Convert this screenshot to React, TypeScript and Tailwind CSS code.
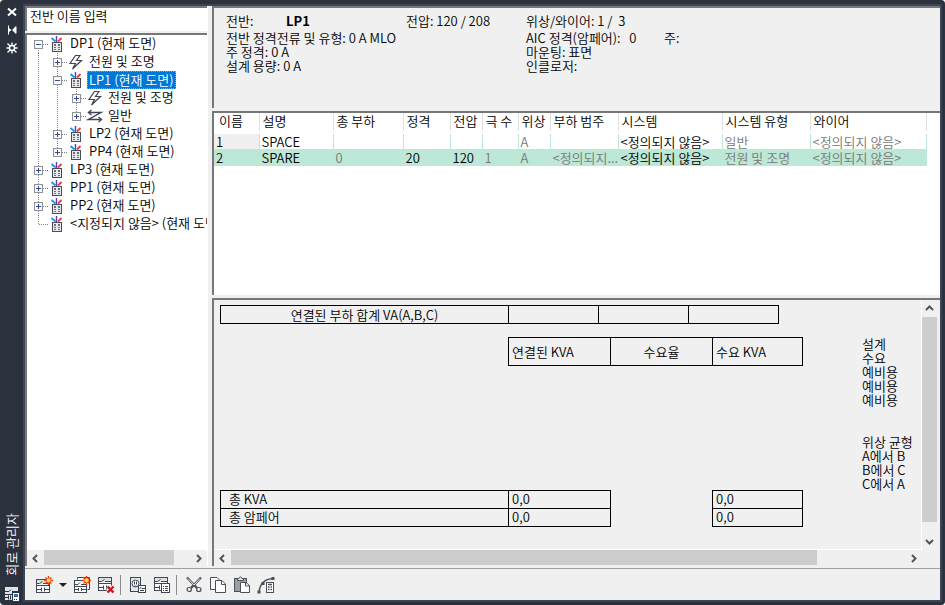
import { useState } from 'react';
import type { ReactNode } from 'react';

type IconKind = 'panel' | 'power' | 'general';
type Guide = 'line' | 'blank' | 'plus' | 'minus' | 'leaf';

interface TreeRow {
  id: string;
  label: string;
  icon: IconKind;
  guides: Guide[];
  first?: boolean;
  last?: boolean;
}

const treeRows: TreeRow[] = [
  { id: 'dp1', label: 'DP1 (현재 도면)', icon: 'panel', guides: ['minus'], first: true },
  { id: 'dp1-power', label: '전원 및 조명', icon: 'power', guides: ['line', 'plus'] },
  { id: 'lp1', label: 'LP1 (현재 도면)', icon: 'panel', guides: ['line', 'minus'] },
  { id: 'lp1-power', label: '전원 및 조명', icon: 'power', guides: ['line', 'line', 'plus'] },
  { id: 'lp1-general', label: '일반', icon: 'general', guides: ['line', 'line', 'plus'], last: true },
  { id: 'lp2', label: 'LP2 (현재 도면)', icon: 'panel', guides: ['line', 'plus'] },
  { id: 'pp4', label: 'PP4 (현재 도면)', icon: 'panel', guides: ['line', 'plus'], last: true },
  { id: 'lp3', label: 'LP3 (현재 도면)', icon: 'panel', guides: ['plus'] },
  { id: 'pp1', label: 'PP1 (현재 도면)', icon: 'panel', guides: ['plus'] },
  { id: 'pp2', label: 'PP2 (현재 도면)', icon: 'panel', guides: ['plus'] },
  { id: 'none', label: '<지정되지 않음> (현재 도면)', icon: 'panel', guides: ['leaf'], last: true },
];

const columns = [
  { title: '이름', width: 'w-[45px]' },
  { title: '설명', width: 'w-[74px]' },
  { title: '총 부하', width: 'w-[70px]' },
  { title: '정격', width: 'w-[47px]' },
  { title: '전압', width: 'w-[32px]' },
  { title: '극 수', width: 'w-[36px]' },
  { title: '위상', width: 'w-[32px]' },
  { title: '부하 범주', width: 'w-[68px]' },
  { title: '시스템', width: 'w-[104px]' },
  { title: '시스템 유형', width: 'w-[88px]' },
  { title: '와이어', width: 'w-[116px]' },
];

const circuits = [
  ['1', 'SPACE', '', '', '', '', 'A', '', '<정의되지 않음>', '일반', '<정의되지 않음>'],
  ['2', 'SPARE', '0', '20', '120', '1', 'A', '<정의되지...', '<정의되지 않음>', '전원 및 조명', '<정의되지 않음>'],
];

// calculated columns are read-only and drawn in grey
const readOnly = [2, 5, 6, 7, 9, 10];

function GuideCell({ kind, first, last }: { kind: Guide; first?: boolean; last?: boolean }) {
  const box = kind === 'plus' || kind === 'minus';
  return (
    <svg width="19" height="18" viewBox="0 0 19 18" className="shrink-0" shapeRendering="crispEdges">
      {kind !== 'blank' && (
        <path d={`M9.5 ${first ? 9 : 0}V${last ? 9 : 18}`} stroke="#808080" strokeDasharray="1 1" />
      )}
      {(box || kind === 'leaf') && <path d="M10 9.5H20" stroke="#808080" strokeDasharray="1 1" />}
      {box && (
        <>
          <rect x="5.5" y="5.5" width="8" height="8" fill="#fafafa" stroke="#919191" />
          <path d="M7 9.5h5" stroke="#2d4b9b" />
          {kind === 'plus' && <path d="M9.5 7v5" stroke="#2d4b9b" />}
        </>
      )}
    </svg>
  );
}

function TreeIcon({ kind }: { kind: IconKind }) {
  if (kind === 'power') {
    return (
      <svg width="20" height="18" viewBox="0 0 20 18" className="shrink-0" fill="none" stroke="#3f4552">
        <path d="M8.5 2.5L3 10.5H8.5L5.5 16L14.5 7.5H9.5L13 2.5Z" strokeWidth="1.2" />
      </svg>
    );
  }
  if (kind === 'general') {
    return (
      <svg width="20" height="18" viewBox="0 0 20 18" className="shrink-0" fill="none" stroke="#3f4552" strokeWidth="1.4">
        <path d="M2.5 5.5H15L2.5 12.5H14.5" />
        <path d="M5.5 3L2.5 5.5L5.5 8M12.5 10L15.5 12.5L12.5 15" />
      </svg>
    );
  }
  return (
    <svg width="20" height="18" viewBox="0 0 20 18" className="shrink-0" fill="none">
      <path d="M3.5 3L7.5 6.5" stroke="#1e90ee" strokeWidth="1.8" />
      <path d="M13.5 3L10 6.5" stroke="#f0343c" strokeWidth="1.8" />
      <path d="M8.5 1V7" stroke="#5a3fb4" strokeWidth="1.4" />
      <rect x="4.5" y="7.5" width="9" height="9" fill="#e6e8ea" stroke="#474d58" />
      <path d="M6 9h2v2H6zM10 9h2v2h-2zM6 12h2v1H6zM10 12h2v1h-2zM6 14h2v1H6zM10 14h2v1h-2z" fill="#6a6f78" />
    </svg>
  );
}

function ArrowButton({ dir, label }: { dir: 'left' | 'right' | 'up' | 'down'; label: string }) {
  const paths = {
    left: 'M10 5L6.5 8.5L10 12',
    right: 'M7 5L10.5 8.5L7 12',
    up: 'M5 10L8.5 6.5L12 10',
    down: 'M5 7L8.5 10.5L12 7',
  };
  return (
    <button type="button" aria-label={label} className="flex size-[17px] shrink-0 items-center justify-center">
      <svg width="17" height="17" viewBox="0 0 17 17" className="shrink-0" fill="none" stroke="#555" strokeWidth="2">
        <path d={paths[dir]} />
      </svg>
    </button>
  );
}

// schematic sheet shared by most of the toolbar icons
function Sheet() {
  return (
    <>
      <rect x="1.5" y="3.5" width="13" height="13" fill="#fafafa" stroke="#3f4754" />
      <path d="M2 4h12v4H2z" fill="#dde1e6" />
      <path d="M2 7.5h2.5l3-2M8 7.5h6M1.5 9.5h13M2 13.5h4M6.5 11.5v4M9.5 11.5v4M10 13.5h4" stroke="#3f4754" />
    </>
  );
}

function Spark() {
  return (
    <>
      <path d="M13.5 0v9M9 4.5h9M10.5 1.5l6 6M16.5 1.5l-6 6" stroke="#e5401b" strokeWidth="1.4" />
      <circle cx="13.5" cy="4.5" r="2" fill="#ffd84a" />
    </>
  );
}

const svgProps = { width: 18, height: 18, viewBox: '0 0 18 18', fill: 'none' };

const NewIcon = () => (
  <svg {...svgProps}>
    <Sheet />
    <Spark />
  </svg>
);

const NewMultipleIcon = () => (
  <svg {...svgProps}>
    <path d="M4.5 3.5V1.5H16.5V13.5H14.5" stroke="#3f4754" fill="#fafafa" />
    <rect x="1.5" y="4.5" width="12" height="12" fill="#fafafa" stroke="#3f4754" />
    <path d="M2 8.5h3l2-2M8 8.5h5M1.5 10.5h12M2 13.5h3M5.5 12v3M8.5 12v3M9 13.5h4" stroke="#3f4754" />
    <Spark />
  </svg>
);

const DeleteIcon = () => (
  <svg {...svgProps}>
    <g transform="translate(0 -2)">
      <Sheet />
    </g>
    <path d="M10.5 10.5l6 6M16.5 10.5l-6 6" stroke="#f0f0f0" strokeWidth="4" />
    <path d="M10.5 10.5l6 6M16.5 10.5l-6 6" stroke="#c4161c" strokeWidth="2.4" />
  </svg>
);

const DeviceIcon = () => (
  <svg {...svgProps}>
    <rect x="1.5" y="1.5" width="10" height="14" fill="#e4e6e8" stroke="#3f4754" />
    <circle cx="6.5" cy="7.5" r="3.5" fill="#fff" stroke="#3f4754" />
    <path d="M5.5 5.5v3M7.5 5.5v3M5.5 10h2" stroke="#3f4754" />
    <rect x="9.5" y="9.5" width="7" height="7" fill="#fff" stroke="#3f4754" />
    <path d="M10.5 12.5l1.5-1 1 1h3M11 14.5h4" stroke="#3f4754" />
  </svg>
);

const ScheduleIcon = () => (
  <svg {...svgProps}>
    <g transform="translate(0 -2)">
      <Sheet />
    </g>
    <rect x="8.5" y="7.5" width="8" height="9" fill="#fff" stroke="#3f4754" />
    <path d="M10 10.5h1M10 12.5h1M10 14.5h1M12 10.5h3M12 12.5h3M12 14.5h3" stroke="#3f4754" />
  </svg>
);

const CutIcon = () => (
  <svg {...svgProps}>
    <path d="M2 1.5L12 12M16 1.5L6 12" stroke="#4a4f58" strokeWidth="2.4" />
    <path d="M3 2.5L9 9M15 2.5L9 9" stroke="#e8eaec" strokeWidth="1" />
    <ellipse cx="4.2" cy="13.5" rx="2.2" ry="2" stroke="#4a4f58" strokeWidth="1.2" />
    <ellipse cx="13.8" cy="13.5" rx="2.2" ry="2" stroke="#4a4f58" strokeWidth="1.2" />
  </svg>
);

const CopyIcon = () => (
  <svg {...svgProps}>
    <path d="M1.5 1.5H8l2.5 2.5V13.5H1.5Z" fill="#fafafa" stroke="#4a4f58" />
    <path d="M6.5 4.5H13l3.5 3.5V16.5H6.5Z" fill="#fff" stroke="#4a4f58" />
    <path d="M12.5 4.5V8.5H16.5" stroke="#4a4f58" />
  </svg>
);

const PasteIcon = () => (
  <svg {...svgProps}>
    <rect x="1.5" y="2.5" width="12" height="13" fill="#9a9ea5" stroke="#4a4f58" />
    <path d="M4.5 4.5v-2h1.5c0-2 3-2 3 0h1.5v2Z" fill="#e0e2e5" stroke="#4a4f58" />
    <path d="M7.5 6.5H13l3.5 3V16.5H7.5Z" fill="#fff" stroke="#4a4f58" />
    <path d="M12.5 6.5V10H16.5" stroke="#4a4f58" />
  </svg>
);

const CurveIcon = () => (
  <svg {...svgProps}>
    <path d="M2 16C3 8 7 3 16 2.5" stroke="#4a4f58" strokeWidth="1.4" />
    <path d="M14.5 1h3v3h-3zM0.5 14.5h3v3h-3zM4.5 6h3v3h-3z" fill="#4a4f58" />
    <rect x="9.5" y="6.5" width="7" height="10" fill="#fff" stroke="#4a4f58" />
    <path d="M11 8.5h4M11 11h1.5M13.5 11H15M11 13.5h1.5M13.5 13.5H15" stroke="#4a4f58" strokeWidth="1.4" />
  </svg>
);

function ToolButton({ label, children }: { label: string; children: ReactNode }) {
  return (
    <button type="button" aria-label={label} title={label} className="flex size-6 items-center justify-center">
      {children}
    </button>
  );
}

function TitleStrip() {
  return (
    <div className="flex w-[23px] shrink-0 flex-col items-center pt-1 pb-[3px] text-white">
      <button type="button" aria-label="닫기" className="flex h-[15px] items-center">
        <svg width="12" height="12" viewBox="0 0 12 12" fill="none" stroke="currentColor" strokeWidth="2">
          <path d="M2 2.5l8 7M10 2.5l-8 7" />
        </svg>
      </button>
      <button type="button" aria-label="자동 숨기기" className="mt-[3px] flex h-[15px] items-center">
        <svg width="12" height="12" viewBox="0 0 12 12" fill="currentColor">
          <path d="M2 1.5h1V4l2.5 2L3 8v2.5H2zM6 6l3-3v-.5h1.5v7H9V9z" />
        </svg>
      </button>
      <button type="button" aria-label="특성" className="mt-[3px] flex h-[15px] items-center">
        <svg width="12" height="12" viewBox="0 0 12 12" fill="none" stroke="currentColor" strokeWidth="1.4">
          <circle cx="6" cy="6" r="2.5" />
          <path d="M6 .5v3M6 8.5v3M.5 6h3M8.5 6h3M1.5 1.5L4 4M8 8l2.5 2.5M10.5 1.5L8 4M4 8l-2.5 2.5" />
        </svg>
      </button>
      <h1 className="mt-auto rotate-180 text-[13px] leading-4 [text-orientation:sideways] [writing-mode:vertical-rl]">
        회로 관리자
      </h1>
      <svg width="16" height="16" viewBox="0 0 16 16" fill="none" className="mt-2.5">
        <path d="M1 1h13v13H1z" fill="#dfe3e8" />
        <path d="M1 5.5h4l2-2M8 5.5h6M1 8.5h13M1 11.5h3M4.5 9.5v4M6.5 9.5v4" stroke="#2b313d" />
        <rect x="8.5" y="6.5" width="7" height="9" fill="#fff" stroke="#2b313d" />
        <path d="M10 8h4v3h-4z" fill="#1f6fc4" />
        <path d="M10 13.5h4" stroke="#2b313d" strokeDasharray="1 1" />
      </svg>
    </div>
  );
}

function PanelTree() {
  const [selected, setSelected] = useState('lp1');
  return (
    <div className="flex min-h-0 flex-1 flex-col border-t-2 border-l-2 border-[#777] bg-white">
      <ul role="tree" className="min-h-0 flex-1 overflow-hidden pl-0.5">
        {treeRows.map((row) => (
          <li key={row.id} role="treeitem" aria-selected={selected === row.id} className="flex h-[18px] items-center">
            {row.guides.map((kind, i) => {
              const own = i === row.guides.length - 1;
              return <GuideCell key={i} kind={kind} first={own && row.first} last={own && row.last} />;
            })}
            <TreeIcon kind={row.icon} />
            <button
              type="button"
              onClick={() => setSelected(row.id)}
              className={
                selected === row.id
                  ? 'h-[18px] shrink-0 border border-dotted border-[#ff8728] bg-[#0078d7] px-px leading-[14px] whitespace-nowrap text-white'
                  : 'h-[18px] shrink-0 px-0.5 pb-0.5 leading-4 whitespace-nowrap'
              }
            >
              {row.label}
            </button>
          </li>
        ))}
      </ul>
      <div className="flex h-4 shrink-0 bg-[#f0f0f0]">
        <ArrowButton dir="left" label="트리 왼쪽으로" />
        <div className="flex flex-1">
          <div className="h-[15px] w-[89%] bg-[#cdcdcd]" />
        </div>
        <ArrowButton dir="right" label="트리 오른쪽으로" />
      </div>
    </div>
  );
}

function PanelInfo() {
  return (
    <section className="flex h-[102px] shrink-0 border-t-2 border-l-2 border-[#777] pt-1.5 pl-3 leading-[14px] whitespace-pre">
      <div className="w-[300px]">
        <p className="mb-[3px] flex">
          <span className="w-[60px]">전반:</span>
          <b className="w-[120px] font-bold">LP1</b>
          <span>전압: 120 / 208</span>
        </p>
        <p>전반 정격전류 및 유형: 0 A MLO</p>
        <p>주 정격: 0 A</p>
        <p>설계 용량: 0 A</p>
      </div>
      <div>
        <p className="mb-[3px]">위상/와이어: 1 /  3</p>
        <p className="flex">
          <span className="w-[138px]">AIC 정격(암페어):   0</span>
          <span>주:</span>
        </p>
        <p>마운팅: 표면</p>
        <p>인클로저:</p>
      </div>
    </section>
  );
}

function CircuitTable() {
  return (
    <section className="h-[184px] shrink-0 overflow-hidden border-t-2 border-l-2 border-[#777] bg-white">
      <table className="w-[712px] table-fixed border-collapse text-left">
        <thead>
          <tr className="h-[18px] leading-4">
            {columns.map((col, i) => (
              <th
                key={col.title}
                scope="col"
                className={`${col.width} ${i === 0 ? 'pl-[5px]' : 'pl-[3px]'} border-r border-[#e0e0e0] p-0 pb-0.5 font-[350] whitespace-nowrap`}
              >
                {col.title}
              </th>
            ))}
          </tr>
          <tr className="h-[3px]" />
        </thead>
        <tbody>
          {circuits.map((row, r) => (
            <tr key={row[0]} className={r === 1 ? 'h-[17px] bg-[#bde7d6]' : 'h-[15px]'}>
              {row.map((cell, c) => (
                <td
                  key={c}
                  className={`${r === 0 && c === 0 ? 'bg-[#f0f0f0]' : ''} ${
                    readOnly.includes(c) ? 'text-[#777]' : 'text-black'
                  } border-r border-[#bde7d6] p-0 pl-0.5 leading-[15px] whitespace-nowrap`}
                >
                  {cell}
                </td>
              ))}
            </tr>
          ))}
        </tbody>
      </table>
    </section>
  );
}

function LoadSummary() {
  return (
    <section className="flex min-h-0 flex-1 border-t-2 border-l-2 border-[#777]">
      <div className="flex min-w-0 flex-1 flex-col">
        <div className="flex min-h-0 flex-1 overflow-hidden border-r border-b border-white pt-[5px] pl-1.5 leading-[14px]">
          <div className="w-[584px] shrink-0">
            <table className="table-fixed border-collapse">
              <tbody>
                <tr className="h-[18px]">
                  <th scope="row" className="w-[288px] border border-black p-0 text-center font-[350]">
                    연결된 부하 합계 VA(A,B,C)
                  </th>
                  <td className="w-[90px] border border-black p-0" />
                  <td className="w-[90px] border border-black p-0" />
                  <td className="w-[90px] border border-black p-0" />
                </tr>
              </tbody>
            </table>
            <table className="mt-[13px] ml-[288px] table-fixed border-collapse">
              <thead>
                <tr className="h-7">
                  <th scope="col" className="w-[102px] border border-black p-0 pl-[3px] text-left font-[350]">연결된 KVA</th>
                  <th scope="col" className="w-[102px] border border-black p-0 text-center font-[350]">수요율</th>
                  <th scope="col" className="w-[90px] border border-black p-0 pl-[3px] text-left font-[350]">수요 KVA</th>
                </tr>
              </thead>
            </table>
            <table className="mt-[124px] table-fixed border-collapse">
              <tbody>
                {['총 KVA', '총 암페어'].map((name) => (
                  <tr key={name} className="h-[18px]">
                    <th scope="row" className="w-[288px] border border-black p-0 pb-0.5 pl-2 text-left font-[350]">{name}</th>
                    <td className="w-[102px] border border-black p-0 pb-0.5 pl-[3px]">0,0</td>
                    <td className="w-[102px] p-0" />
                    <td className="w-[90px] border border-black p-0 pb-0.5 pl-[3px]">0,0</td>
                  </tr>
                ))}
              </tbody>
            </table>
          </div>
          <div className="ml-[58px] pt-8 whitespace-nowrap">
            <p>설계</p>
            <p>수요</p>
            <p>예비용</p>
            <p>예비용</p>
            <p>예비용</p>
            <p className="mt-7">위상 균형</p>
            <p>A에서 B</p>
            <p>B에서 C</p>
            <p>C에서 A</p>
          </div>
        </div>
        <div className="flex h-4 shrink-0">
          <ArrowButton dir="left" label="요약 왼쪽으로" />
          <div className="flex flex-1">
            <div className="h-[15px] w-[87%] bg-[#cdcdcd]" />
          </div>
          <ArrowButton dir="right" label="요약 오른쪽으로" />
        </div>
      </div>
      <div className="mr-[3px] mb-4 flex w-[15px] shrink-0 flex-col items-center">
        <ArrowButton dir="up" label="위로" />
        <div className="flex w-full flex-1 flex-col">
          <div className="h-[95%] bg-[#cdcdcd]" />
        </div>
        <ArrowButton dir="down" label="아래로" />
      </div>
    </section>
  );
}

function Toolbar() {
  return (
    <div role="toolbar" className="flex h-8 shrink-0 items-center border-t border-[#a0a0a0] pl-[7px]">
      <ToolButton label="새 회로"><NewIcon /></ToolButton>
      <button type="button" aria-label="새 회로 옵션" className="flex h-6 w-[14px] items-center justify-center">
        <svg width="8" height="4" viewBox="0 0 8 4" fill="#222">
          <path d="M0 0h8L4 4z" />
        </svg>
      </button>
      <ToolButton label="여러 회로 작성"><NewMultipleIcon /></ToolButton>
      <ToolButton label="회로 삭제"><DeleteIcon /></ToolButton>
      <div className="mr-[5px] ml-0.5 h-5 w-px bg-[#8c8c8c]" />
      <ToolButton label="장치 표시"><DeviceIcon /></ToolButton>
      <ToolButton label="패널 일람표"><ScheduleIcon /></ToolButton>
      <div className="mr-[5px] ml-0.5 h-5 w-px bg-[#8c8c8c]" />
      <ToolButton label="잘라내기"><CutIcon /></ToolButton>
      <ToolButton label="복사"><CopyIcon /></ToolButton>
      <ToolButton label="붙여넣기"><PasteIcon /></ToolButton>
      <ToolButton label="부하 계산"><CurveIcon /></ToolButton>
    </div>
  );
}

export default function App() {
  const [query, setQuery] = useState('전반 이름 입력');

  return (
    <div className="bg-white font-['Noto_Sans_CJK_KR',sans-serif] text-[13px] font-[350] text-black">
      <div className="flex h-screen overflow-hidden rounded-sm bg-[#2b313d]">
        <TitleStrip />
        <div className="mt-1 mr-[3px] mb-[3px] flex min-w-0 flex-1 flex-col border-2 border-[#3b4556] bg-[#f0f0f0]">
          <main className="flex min-h-0 flex-1 pb-0.5">
            <aside className="mr-1 flex w-[183px] shrink-0 flex-col border-r border-white">
              <input
                type="text"
                aria-label="전반 이름"
                value={query}
                onChange={(e) => setQuery(e.target.value)}
                className="mb-0.5 h-[25px] w-full shrink-0 border-t-2 border-l-2 border-[#777] bg-white pb-2 pl-[3px] leading-4 outline-none"
              />
              <PanelTree />
            </aside>
            <div className="flex min-w-0 flex-1 flex-col gap-[3px]">
              <PanelInfo />
              <CircuitTable />
              <LoadSummary />
            </div>
          </main>
          <Toolbar />
        </div>
      </div>
    </div>
  );
}
